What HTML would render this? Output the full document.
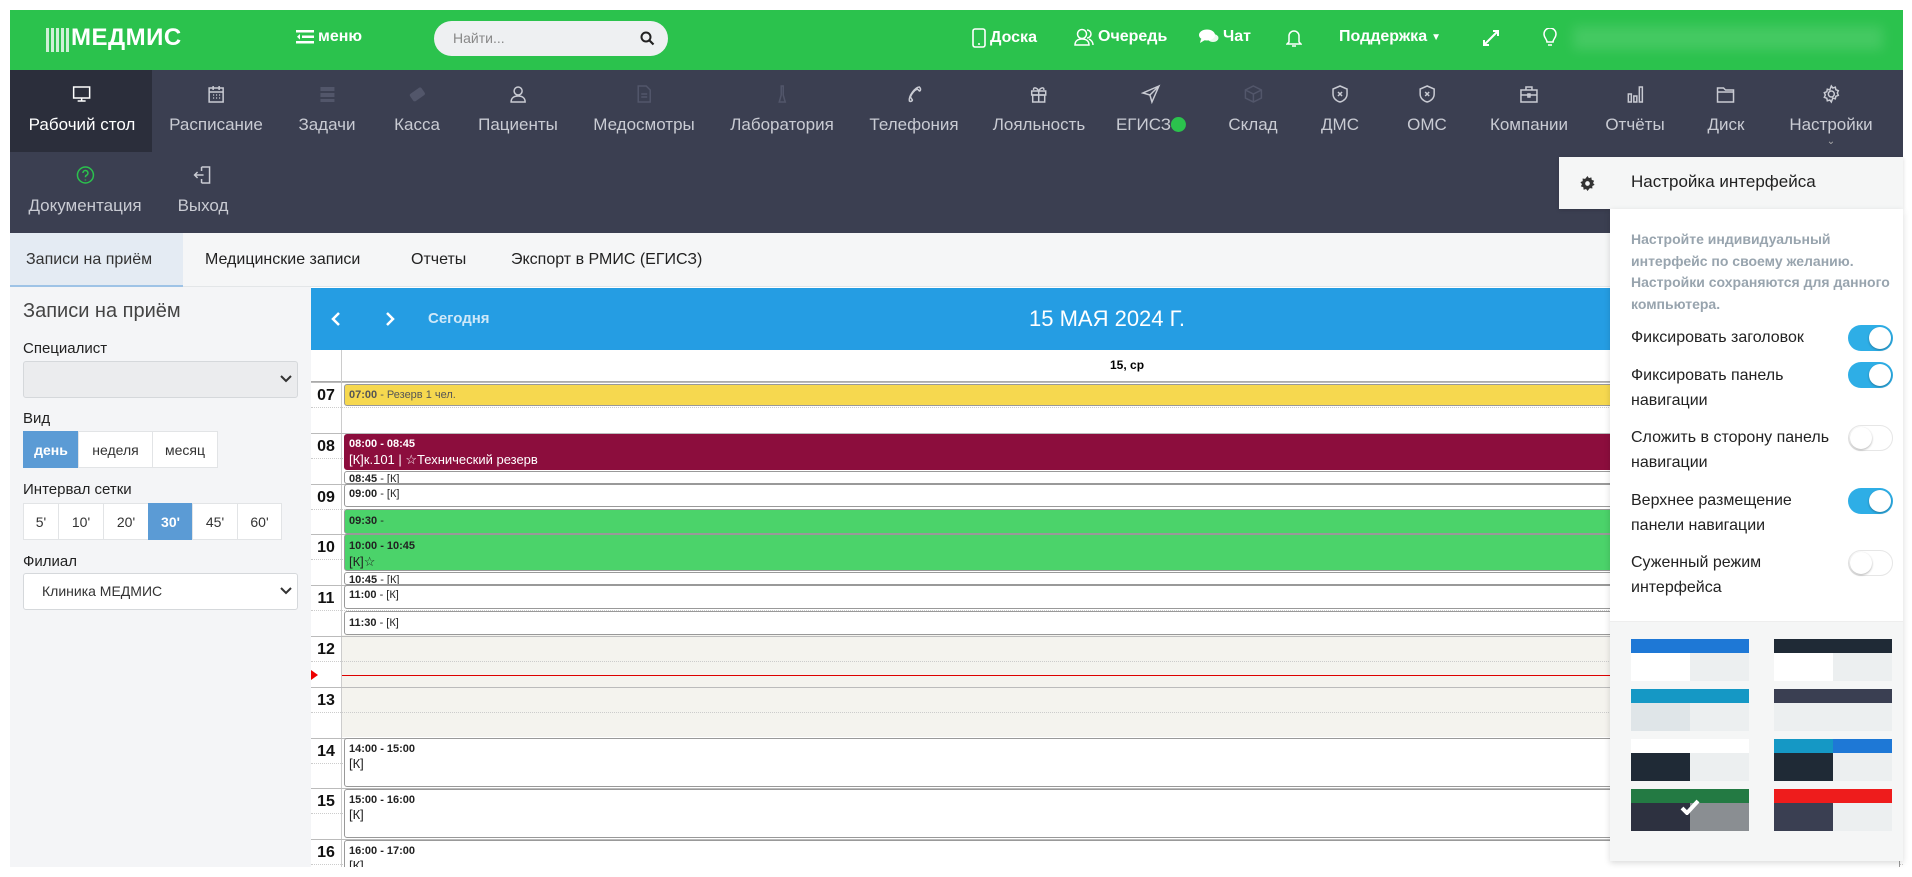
<!DOCTYPE html>
<html><head><meta charset="utf-8">
<style>
*{box-sizing:border-box;margin:0;padding:0}
body{width:1912px;height:877px;background:#fff;font-family:"Liberation Sans",sans-serif;position:relative;overflow:hidden}
.a{position:absolute}
.hdr{left:10px;top:10px;width:1893px;height:60px;background:#2bc24d}
.ht{color:#fff;font-weight:bold;font-size:16px;top:28px;display:flex;align-items:center;gap:4px}
.nav{left:10px;top:70px;width:1893px;height:163px;background:#3b3f51}
.ni{position:absolute;text-align:center;color:#c9cbd3;font-family:"Liberation Sans Narrow","Liberation Sans",sans-serif;font-size:17px;white-space:nowrap;transform:translateX(-50%)}
.ni svg{display:block;margin:0 auto 11px;width:20px;height:20px}
.tabs{left:10px;top:233px;width:1893px;height:54px;background:#f5f6f7;border-bottom:1px solid #e3e6e8}
.tab{position:absolute;top:0;height:54px;line-height:54px;font-size:16px;color:#222}
.side{left:10px;top:287px;width:301px;height:580px;background:#f4f5f7}
.lbl{position:absolute;left:23px;font-size:15px;color:#222}
.sel{position:absolute;left:23px;width:275px;height:37px;border:1px solid #d5d8db;border-radius:3px;background:#fff}
.bg{position:absolute;display:flex;height:37px}
.bg div{border:1px solid #e2e4e6;background:#fff;font-size:14px;color:#333;display:flex;align-items:center;justify-content:center;margin-left:-1px}
.bg div.on{background:#5b9bd5;color:#fff;font-weight:bold;border-color:#5b9bd5}
.cal{left:311px;top:288px;width:1592px;height:579px;background:#fff}
.row{position:absolute;left:311px;width:1592px;border-top:1px solid #bbb}
.hl{position:absolute;left:311px;width:30px;text-align:center;font-weight:bold;font-size:16px;color:#111}
.ev{position:absolute;left:344px;width:1556px;border:1px solid #999;border-radius:3px;font-size:11px;padding:1px 4px;color:#222;overflow:hidden;line-height:13px}
.ev b{font-weight:bold}
.pnl{left:1610px;top:209px;width:293px;height:652px;background:#fff;box-shadow:0 2px 6px rgba(0,0,0,.15)}
.tl{position:absolute;left:1631px;font-size:16px;color:#222;line-height:25px}
.tg{position:absolute;left:1848px;width:45px;height:26px;border-radius:13px;background:#2eaee6}
.tg::after{content:"";position:absolute;right:2px;top:2px;width:22px;height:22px;border-radius:50%;background:#fff;box-shadow:0 1px 2px rgba(0,0,0,.3)}
.tg.off{background:#fff;border:1px solid #e6e6e6}
.tg.off::after{left:1px;right:auto;top:1px}
.sw{position:absolute;width:118px;height:42px}
.sw i{position:absolute;display:block}
</style></head><body>
<div class="a hdr"></div>
<div class="a" style="left:46px;top:28px;width:23px;height:24px;background:
repeating-linear-gradient(90deg,rgba(255,255,255,.9) 0 3px,transparent 3px 5px),#2bc24d;opacity:.85"></div>
<div class="a" style="left:71px;top:24px;color:#fff;font-weight:bold;font-size:24px;letter-spacing:0.5px">МЕДМИС</div>
<div class="a ht" style="left:296px"><svg width="18" height="14" viewBox="0 0 18 14"><rect x="0" y="0" width="18" height="2.5" fill="#fff"/><rect x="6" y="5.5" width="12" height="2.5" fill="#fff"/><rect x="0" y="11" width="18" height="2.5" fill="#fff"/><path d="M4 4l-3 2.8 3 2.8z" fill="#fff"/></svg>меню</div>
<div class="a" style="left:434px;top:21px;width:234px;height:35px;border-radius:18px;background:#eef0f2"></div>
<div class="a" style="left:453px;top:30px;font-size:14px;color:#888">Найти...</div>
<svg class="a" style="left:640px;top:31px" width="15" height="15" viewBox="0 0 15 15"><circle cx="6" cy="6" r="4.5" stroke="#222" stroke-width="2" fill="none"/><path d="M9.5 9.5l4 4" stroke="#222" stroke-width="2.2"/></svg>
<div class="a ht" style="left:972px"><svg width="14" height="20" viewBox="0 0 14 20"><rect x="1" y="1" width="12" height="18" rx="2" stroke="#fff" stroke-width="1.6" fill="none"/><circle cx="7" cy="16" r="1" fill="#fff"/></svg>Доска</div>
<div class="a ht" style="left:1074px"><svg width="20" height="18" viewBox="0 0 20 18"><circle cx="8" cy="6" r="4.5" stroke="#fff" stroke-width="1.5" fill="none"/><path d="M1 17c0-4 3-6 7-6s7 2 7 6z" stroke="#fff" stroke-width="1.5" fill="none"/><path d="M13 2a4 4 0 0 1 0 8M15 11c2 1 4 3 4 6" stroke="#fff" stroke-width="1.5" fill="none"/></svg>Очередь</div>
<div class="a ht" style="left:1199px"><svg width="20" height="16" viewBox="0 0 20 16"><ellipse cx="8" cy="6" rx="8" ry="5.5" fill="#fff"/><path d="M2 10l-1 4 5-3z" fill="#fff"/><ellipse cx="14" cy="9" rx="5.5" ry="4" fill="#fff" opacity=".9"/></svg>Чат</div>
<svg class="a" style="left:1286px;top:28px" width="16" height="20" viewBox="0 0 16 20"><path d="M3 14V8a5 5 0 0 1 10 0v6l2 2H1z" stroke="#fff" stroke-width="1.5" fill="none"/><path d="M6 18h4" stroke="#fff" stroke-width="1.5"/></svg>
<div class="a ht" style="left:1339px">Поддержка <span style="font-size:10px">▼</span></div>
<svg class="a" style="left:1483px;top:30px" width="16" height="16" viewBox="0 0 16 16"><path d="M1 15L15 1M10 1h5v5M1 10v5h5" stroke="#fff" stroke-width="2" fill="none"/></svg>
<svg class="a" style="left:1543px;top:28px" width="14" height="20" viewBox="0 0 14 20"><path d="M4 14c0-3-3-4-3-8a6 6 0 0 1 12 0c0 4-3 5-3 8zM5 17h4" stroke="#fff" stroke-width="1.5" fill="none"/></svg>
<div class="a" style="left:1573px;top:26px;width:310px;height:24px;background:rgba(255,255,255,.12);filter:blur(6px)"></div>

<div class="a nav"></div>
<div class="a" style="left:10px;top:70px;width:142px;height:82px;background:#2b2e3b"></div>
<div id="navs"></div>

<div class="a tabs"></div>
<div class="a" style="left:10px;top:233px;width:173px;height:54px;background:#e4ebf3;border-bottom:2px solid #9ec3e6"></div>
<div class="tab" style="left:26px;top:233px;color:#333">Записи на приём</div>
<div class="tab" style="left:205px;top:233px">Медицинские записи</div>
<div class="tab" style="left:411px;top:233px">Отчеты</div>
<div class="tab" style="left:511px;top:233px">Экспорт в РМИС (ЕГИСЗ)</div>

<div class="a side"></div>
<div class="lbl" style="top:300px;font-size:20px;color:#444">Записи на приём</div>
<div class="lbl" style="top:340px">Специалист</div>
<div class="sel" style="top:361px;background:#ebecee"></div>
<svg class="a" style="left:280px;top:375px" width="12" height="8" viewBox="0 0 12 8"><path d="M1 1l5 5 5-5" stroke="#333" stroke-width="2" fill="none"/></svg>
<div class="lbl" style="top:410px">Вид</div>
<div class="bg" style="left:23px;top:431px"><div class="on" style="width:56px;margin-left:0">день</div><div style="width:75px">неделя</div><div style="width:66px">месяц</div></div>
<div class="lbl" style="top:481px">Интервал сетки</div>
<div class="bg" style="left:23px;top:503px"><div style="width:36px;margin-left:0">5'</div><div style="width:46px">10'</div><div style="width:46px">20'</div><div class="on" style="width:45px">30'</div><div style="width:46px">45'</div><div style="width:45px">60'</div></div>
<div class="lbl" style="top:553px">Филиал</div>
<div class="sel" style="top:573px"></div>
<div class="a" style="left:42px;top:583px;font-size:14px;color:#333">Клиника МЕДМИС</div>
<svg class="a" style="left:280px;top:587px" width="12" height="8" viewBox="0 0 12 8"><path d="M1 1l5 5 5-5" stroke="#333" stroke-width="2" fill="none"/></svg>

<div class="a cal"></div>
<div class="a" style="left:311px;top:288px;width:1592px;height:62px;background:#259de3"></div>
<svg class="a" style="left:330px;top:311px" width="12" height="16" viewBox="0 0 12 16"><path d="M9 2L3 8l6 6" stroke="#fff" stroke-width="2.5" fill="none"/></svg>
<svg class="a" style="left:384px;top:311px" width="12" height="16" viewBox="0 0 12 16"><path d="M3 2l6 6-6 6" stroke="#fff" stroke-width="2.5" fill="none"/></svg>
<div class="a" style="left:428px;top:310px;color:#cfe8f8;font-size:15px;font-weight:bold">Сегодня</div>
<div class="a" style="left:1029px;top:306px;color:#fff;font-size:22px">15 МАЯ 2024 Г.</div>
<div class="a" style="left:311px;top:350px;width:1592px;height:33px;border-bottom:2px solid #aaa"></div>
<div class="a" style="left:1110px;top:358px;font-size:12px;font-weight:bold">15, ср</div>
<div class="a" style="left:341px;top:350px;width:1px;height:517px;background:#ccc"></div>
<div class="a" style="left:342px;top:635px;width:1561px;height:102px;background:#f4f3ee"></div>
<div id="rows"></div>
<div class="a" style="left:342px;top:675px;width:1561px;height:1px;background:#d00"></div>
<div class="a" style="left:311px;top:670px;width:0;height:0;border-left:7px solid #e00;border-top:5px solid transparent;border-bottom:5px solid transparent"></div>

<div class="ev" style="top:384px;height:22px;background:#f6d84f;color:#555;padding-top:4px"><b style="color:#555">07:00</b> - Резерв 1 чел.</div>
<div class="ev" style="top:434px;height:36px;background:#8c0d3d;color:#fff;border-color:#8c0d3d;padding-top:3px"><b>08:00 - 08:45</b><br><span style="font-size:13px;line-height:17px">[К]к.101 | ☆Технический резерв</span></div>
<div class="ev" style="top:471px;height:13px;background:#fff"><b>08:45</b> - [К]</div>
<div class="ev" style="top:484px;height:23px;background:#fff;padding-top:3px"><b>09:00</b> - [К]</div>
<div class="ev" style="top:509px;height:25px;background:#4bd36a;padding-top:5px"><b>09:30</b> -</div>
<div class="ev" style="top:534px;height:37px;background:#4bd36a;padding-top:5px"><b>10:00 - 10:45</b><br><span style="font-size:13px;line-height:17px">[К]☆</span></div>
<div class="ev" style="top:572px;height:13px;background:#fff"><b>10:45</b> - [К]</div>
<div class="ev" style="top:585px;height:24px;background:#fff;padding-top:3px"><b>11:00</b> - [К]</div>
<div class="ev" style="top:611px;height:24px;background:#fff;padding-top:5px"><b>11:30</b> - [К]</div>
<div class="ev" style="top:738px;height:49px;background:#fff;padding-top:4px"><b>14:00 - 15:00</b><br><span style="font-size:13px;line-height:16px">[К]</span></div>
<div class="ev" style="top:789px;height:49px;background:#fff;padding-top:4px"><b>15:00 - 16:00</b><br><span style="font-size:13px;line-height:16px">[К]</span></div>
<div class="ev" style="top:840px;height:27px;background:#fff;padding-top:4px;border-bottom:none;border-radius:3px 3px 0 0"><b>16:00 - 17:00</b><br><span style="font-size:13px;line-height:16px">[К]</span></div>
<div class="a" style="left:0;top:867px;width:1912px;height:10px;background:#fff"></div>

<div class="a" style="left:1559px;top:157px;width:344px;height:52px;background:#f5f6f6;box-shadow:0 1px 4px rgba(0,0,0,.15)"></div>
<svg class="a" style="left:1580px;top:176px" width="15" height="15" viewBox="0 0 16 16"><path d="M8 0l1.5 2.2 2.6-.8.4 2.7 2.6.9-1.2 2.4 1.7 2.1-2.5 1.1.1 2.7-2.7-.4L8 16l-1.5-2.2-2.6.8-.4-2.7L.9 11l1.2-2.4L.4 6.5l2.5-1.1-.1-2.7 2.7.4z" fill="#333"/><circle cx="8" cy="8" r="2.5" fill="#f5f6f6"/></svg>
<div class="a" style="left:1631px;top:172px;font-size:17px;color:#222">Настройка интерфейса</div>
<div class="a pnl"></div>
<div class="a" style="left:1610px;top:621px;width:293px;height:240px;background:#f5f6f6;border-top:1px solid #eee"></div>
<div class="a" style="left:1631px;top:229px;width:260px;font-size:14px;line-height:21.5px;color:#98a4ae;font-weight:bold">Настройте индивидуальный интерфейс по своему желанию. Настройки сохраняются для данного компьютера.</div>
<div class="tl" style="top:325px">Фиксировать заголовок</div><div class="tg" style="top:325px"></div>
<div class="tl" style="top:363px">Фиксировать панель<br>навигации</div><div class="tg" style="top:362px"></div>
<div class="tl" style="top:425px">Сложить в сторону панель<br>навигации</div><div class="tg off" style="top:425px"></div>
<div class="tl" style="top:488px">Верхнее размещение<br>панели навигации</div><div class="tg" style="top:488px"></div>
<div class="tl" style="top:550px">Суженный режим<br>интерфейса</div><div class="tg off" style="top:550px"></div>

<div class="sw" style="left:1631px;top:639px"><i style="left:0;top:0;width:118px;height:14px;background:#1e78d6"></i><i style="left:0;top:14px;width:59px;height:28px;background:#fff"></i><i style="left:59px;top:14px;width:59px;height:28px;background:#eceff0"></i></div>
<div class="sw" style="left:1774px;top:639px"><i style="left:0;top:0;width:118px;height:14px;background:#1f2a36"></i><i style="left:0;top:14px;width:59px;height:28px;background:#fff"></i><i style="left:59px;top:14px;width:59px;height:28px;background:#eceff0"></i></div>
<div class="sw" style="left:1631px;top:689px"><i style="left:0;top:0;width:118px;height:14px;background:#1598c5"></i><i style="left:0;top:14px;width:59px;height:28px;background:#dfe5e8"></i><i style="left:59px;top:14px;width:59px;height:28px;background:#eceff0"></i></div>
<div class="sw" style="left:1774px;top:689px"><i style="left:0;top:0;width:118px;height:14px;background:#3a3f52"></i><i style="left:0;top:14px;width:118px;height:28px;background:#eceff0"></i></div>
<div class="sw" style="left:1631px;top:739px"><i style="left:0;top:0;width:118px;height:14px;background:#fff"></i><i style="left:0;top:14px;width:59px;height:28px;background:#1f2a36"></i><i style="left:59px;top:14px;width:59px;height:28px;background:#eceff0"></i></div>
<div class="sw" style="left:1774px;top:739px"><i style="left:0;top:0;width:59px;height:14px;background:#1598c5"></i><i style="left:59px;top:0;width:59px;height:14px;background:#1e78d6"></i><i style="left:0;top:14px;width:59px;height:28px;background:#1f2a36"></i><i style="left:59px;top:14px;width:59px;height:28px;background:#eceff0"></i></div>
<div class="sw" style="left:1631px;top:789px"><i style="left:0;top:0;width:118px;height:14px;background:#237a43"></i><i style="left:0;top:14px;width:59px;height:28px;background:#2d3140"></i><i style="left:59px;top:14px;width:59px;height:28px;background:#8a8e92"></i><svg style="position:absolute;left:49px;top:10px" width="20" height="16" viewBox="0 0 20 16"><path d="M2 9l5 5L18 2" stroke="#fff" stroke-width="4" fill="none"/></svg></div>
<div class="sw" style="left:1774px;top:789px"><i style="left:0;top:0;width:118px;height:14px;background:#ee1c1c"></i><i style="left:0;top:14px;width:59px;height:28px;background:#3a3f52"></i><i style="left:59px;top:14px;width:59px;height:28px;background:#eceff0"></i></div>

<script>
var s='stroke="currentColor" stroke-width="1.5" fill="none"';
var ic={
desk:'<rect x="2" y="3" width="16" height="11" '+s+'/><path d="M10 14v3M6 17h8" '+s+'/>',
cal:'<rect x="3" y="4" width="14" height="14" '+s+'/><path d="M7 2v4M13 2v4M3 8h14" '+s+'/><path d="M7 11h1M10 11h1M13 11h1M7 14h1M10 14h1M13 14h1" '+s+'/>',
task:'<rect x="3" y="3" width="14" height="4" fill="currentColor"/><rect x="3" y="9" width="14" height="4" fill="currentColor"/><rect x="3" y="15" width="14" height="3" fill="currentColor"/>',
cash:'<rect x="3" y="6" width="14" height="9" rx="2" transform="rotate(-35 10 10)" fill="currentColor"/>',
pat:'<circle cx="10" cy="7" r="4" '+s+'/><path d="M3 18c0-4 3-6 7-6s7 2 7 6z" '+s+'/>',
doc:'<path d="M4 2h8l4 4v12H4z" '+s+'/><path d="M7 10h6M7 13h6" '+s+'/>',
lab:'<path d="M9 2h2v9l2 7H7l2-7z" '+s+'/>',
tel:'<path d="M15 3c-4 0-11 9-10 14 1 1 3 0 3-1l-2-3c1-3 4-7 7-8l2 2c1 0 2-2 0-4z" '+s+'/>',
gift:'<rect x="3" y="7" width="14" height="4" '+s+'/><rect x="4" y="11" width="12" height="7" '+s+'/><path d="M10 7v11M10 7c-2-4-6-4-5-1M10 7c2-4 6-4 5-1" '+s+'/>',
send:'<path d="M18 2L2 9l7 2 2 7z M9 11L18 2" '+s+'/>',
box:'<path d="M10 2l8 4v8l-8 4-8-4V6z M2 6l8 4 8-4M10 10v8" '+s+'/>',
shield:'<path d="M10 2l7 3v5c0 4-3 7-7 8-4-1-7-4-7-8V5z" '+s+'/><path d="M8 8l4 4M12 8l-4 4" '+s+'/>',
brief:'<rect x="2" y="6" width="16" height="12" '+s+'/><path d="M7 6V3h6v3M2 11h16M9 10h2v3H9z" '+s+'/>',
chart:'<path d="M3 18V10h3v8zM8.5 18V12h3v6zM14 18V3h3v15z" '+s+'/>',
fold:'<path d="M2 4h6l2 2h8v12H2z M2 8h16" '+s+'/>',
gear:'<circle cx="10" cy="10" r="3" '+s+'/><path d="M10 2l1.5 2 2.5-.8.5 2.5 2.5 1-1 2.3 1 2.3-2.5 1-.5 2.5-2.5-.8L10 18l-1.5-2-2.5.8-.5-2.5-2.5-1 1-2.3-1-2.3 2.5-1 .5-2.5 2.5.8z" '+s+'/>',
help:'<circle cx="10" cy="10" r="8" '+s+'/><path d="M7.5 8a2.5 2.5 0 1 1 3.5 2.3c-1 .5-1 1-1 2M10 14.5v1" '+s+'/>',
exit:'<path d="M9 2h8v16H9M9 6V2M9 18v-4M2 10h9M5 7l-3 3 3 3" '+s+'/>'
};
var items=[[82,'Рабочий стол','desk','#fff','#fff'],[216,'Расписание','cal'],[327,'Задачи','task','#52566a'],[417,'Касса','cash','#52566a'],[518,'Пациенты','pat'],[644,'Медосмотры','doc','#52566a'],[782,'Лаборатория','lab','#52566a'],[914,'Телефония','tel'],[1039,'Лояльность','gift'],[1151,'ЕГИСЗ','send'],[1253,'Склад','box','#52566a'],[1340,'ДМС','shield'],[1427,'ОМС','shield'],[1529,'Компании','brief'],[1635,'Отчёты','chart'],[1726,'Диск','fold'],[1831,'Настройки','gear']];
var h='';
items.forEach(function(it){
 var c=it[3]||'#c9cbd3', tc=it[4]||'#c9cbd3';
 var lab=it[1]; if(lab=='ЕГИСЗ') lab+='<span style="display:inline-block;width:15px;height:15px;border-radius:50%;background:#2bc24d;vertical-align:-2px"></span>';
 h+='<div class="ni" style="left:'+it[0]+'px;top:84px;color:'+tc+'"><svg viewBox="0 0 20 20" style="color:'+c+'">'+ic[it[2]]+'</svg>'+lab+'</div>';
});
h+='<div class="ni" style="left:1831px;top:136px;font-size:10px;color:#aaa">&#8964;</div>';
h+='<div class="ni" style="left:85px;top:165px"><svg viewBox="0 0 20 20" style="color:#2bc24d">'+ic.help+'</svg>Документация</div>';
h+='<div class="ni" style="left:203px;top:165px"><svg viewBox="0 0 20 20" style="color:#c9cbd3">'+ic.exit+'</svg>Выход</div>';
document.getElementById('navs').innerHTML=h;
var r='';
for(var i=0;i<10;i++){var t=382+i*50.8;
 r+='<div class="row" style="top:'+t+'px"></div>';
 r+='<div class="a" style="left:311px;top:'+(t+25)+'px;width:1592px;border-top:1px dotted #ccc"></div>';
 r+='<div class="hl" style="top:'+(t+5)+'px">'+('0'+(7+i)).slice(-2)+'</div>';}
document.getElementById('rows').innerHTML=r;
</script>
</body></html>
